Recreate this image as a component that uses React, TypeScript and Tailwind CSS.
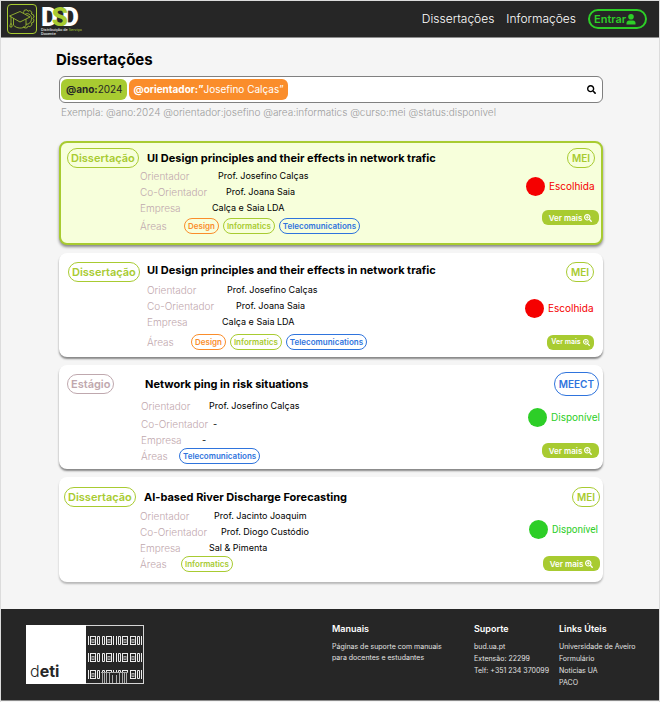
import type { ReactNode } from 'react';
import { FaSearch, FaSearchPlus } from 'react-icons/fa';

const TONES = {
  green: 'border-[#a8cb31] text-[#a8cb31]',
  blue: 'border-[#2f74dd] text-[#2f74dd]',
  orange: 'border-[#fa8d2b] text-[#fa8d2b]',
  mauve: 'border-[#bfa8ae] text-[#bfa8ae]',
};
type Tone = keyof typeof TONES;

const AREAS: Record<string, Tone> = {
  Design: 'orange',
  Informatics: 'green',
  Telecomunications: 'blue',
};

interface Field {
  label: string;
  value: string;
  labelWidth: string;
}

interface Proposal {
  id: number;
  kind: string;
  kindTone: Tone;
  title: string;
  titleStyle: string;
  course: string;
  courseTone: Tone;
  courseStyle: string;
  available: boolean;
  statusStyle: string;
  statusFont: string;
  fields: Field[];
  fieldsStyle: string;
  areas: string[];
  areasStyle: string;
  areasLabel: string;
  cardStyle: string;
  leftStyle: string;
  rightStyle: string;
  buttonStyle: string;
}

const PROPOSALS: Proposal[] = [
  {
    id: 1,
    kind: 'Dissertação',
    kindTone: 'green',
    title: 'UI Design principles and their effects in network trafic',
    titleStyle: 'pl-[7px]',
    course: 'MEI',
    courseTone: 'green',
    courseStyle: 'h-5 mr-1',
    available: false,
    statusStyle: 'mt-[9px] mr-1',
    statusFont: 'w-[46px]',
    fields: [
      { label: 'Orientador', value: 'Prof. Josefino Calças', labelWidth: 'w-[78px]' },
      { label: 'Co-Orientador', value: 'Prof. Joana Saia', labelWidth: 'w-[86px]' },
      { label: 'Empresa', value: 'Calça e Saia LDA', labelWidth: 'w-[72px]' },
    ],
    fieldsStyle: '',
    areas: ['Design', 'Informatics', 'Telecomunications'],
    areasStyle: 'mt-0.5',
    areasLabel: 'w-11',
    cardStyle: 'border-2 border-[#a8cb31] bg-[#f7ffdb] pt-[5px] pl-1.5 pr-0.5 pb-[9px] shadow-[0_2px_3px_rgba(0,0,0,0.45)]',
    leftStyle: 'w-[73px]',
    rightStyle: '',
    buttonStyle: 'w-[57px] text-[8px] mt-3.5',
  },
  {
    id: 2,
    kind: 'Dissertação',
    kindTone: 'green',
    title: 'UI Design principles and their effects in network trafic',
    titleStyle: '',
    course: 'MEI',
    courseTone: 'green',
    courseStyle: 'h-5',
    available: false,
    statusStyle: 'mt-[17px]',
    statusFont: 'w-[46px]',
    fields: [
      { label: 'Orientador', value: 'Prof. Josefino Calças', labelWidth: 'w-20' },
      { label: 'Co-Orientador', value: 'Prof. Joana Saia', labelWidth: 'w-[89px]' },
      { label: 'Empresa', value: 'Calça e Saia LDA', labelWidth: 'w-[75px]' },
    ],
    fieldsStyle: 'mt-0.5',
    areas: ['Design', 'Informatics', 'Telecomunications'],
    areasStyle: 'mt-1',
    areasLabel: 'w-11',
    cardStyle: 'bg-white pt-[7px] pl-[9px] pr-[9px] pb-[7px] shadow-[0_2px_2px_rgba(0,0,0,0.45)]',
    leftStyle: 'w-[79px] pt-0.5',
    rightStyle: 'pt-0.5',
    buttonStyle: 'w-[47px] text-[7px] mt-[17px]',
  },
  {
    id: 3,
    kind: 'Estágio',
    kindTone: 'mauve',
    title: 'Network ping in risk situations',
    titleStyle: 'pl-1 mt-0.5',
    course: 'MEECT',
    courseTone: 'blue',
    courseStyle: 'h-6',
    available: true,
    statusStyle: 'mt-3',
    statusFont: 'w-12',
    fields: [
      { label: 'Orientador', value: 'Prof. Josefino Calças', labelWidth: 'w-[68px] mb-0.5' },
      { label: 'Co-Orientador', value: '-', labelWidth: 'w-[72px]' },
      { label: 'Empresa', value: '-', labelWidth: 'w-[61px]' },
    ],
    fieldsStyle: 'mt-1',
    areas: ['Telecomunications'],
    areasStyle: '',
    areasLabel: 'w-[38px]',
    cardStyle: 'bg-white pt-[7px] pl-2 pr-1 pb-[5px] shadow-[0_2px_2px_rgba(0,0,0,0.45)]',
    leftStyle: 'w-[74px] pt-0.5',
    rightStyle: '',
    buttonStyle: 'w-[57px] text-[8px] mt-4',
  },
  {
    id: 4,
    kind: 'Dissertação',
    kindTone: 'green',
    title: 'AI-based River Discharge Forecasting',
    titleStyle: 'pl-1',
    course: 'MEI',
    courseTone: 'green',
    courseStyle: 'h-5',
    available: true,
    statusStyle: 'mt-[13px]',
    statusFont: "w-12 font-['Roboto',sans-serif]",
    fields: [
      { label: 'Orientador', value: 'Prof. Jacinto Joaquim', labelWidth: 'w-[74px]' },
      { label: 'Co-Orientador', value: 'Prof. Diogo Custódio', labelWidth: 'w-[81px]' },
      { label: 'Empresa', value: 'Sal & Pimenta', labelWidth: 'w-[69px]' },
    ],
    fieldsStyle: 'mt-px',
    areas: ['Informatics'],
    areasStyle: '',
    areasLabel: 'w-[41px]',
    cardStyle: 'bg-white pt-2.5 pl-[5px] pr-[3px] pb-2.5 shadow-[0_2px_2px_rgba(0,0,0,0.25)]',
    leftStyle: 'w-[76px]',
    rightStyle: '',
    buttonStyle: 'w-[57px] text-[8px] mt-[17px]',
  },
];

function Pill({ tone, className, children }: { tone: Tone; className: string; children: ReactNode }) {
  return (
    <span
      className={`inline-flex items-center justify-center rounded-full border whitespace-nowrap ${TONES[tone]} ${className}`}
    >
      {children}
    </span>
  );
}

function Brand() {
  return (
    <a href="#inicio" className="flex items-start gap-1 self-start pt-[3px] font-['Roboto',sans-serif]">
      <svg viewBox="0 0 30 30" className="size-[30px]" fill="none" stroke="#a8cb31" strokeWidth="0.8" aria-hidden="true">
        <rect x="0.5" y="0.5" width="29" height="29" rx="3.5" strokeWidth="1" />
        <path d="M2.5 12 13 7.500l10 5.500-10 5z" strokeLinejoin="round" />
        <path d="M6.500 14.200v7c3 3.400 9.500 4 12.500.5v-6.500M4 12.500v7.500M3 21l1-1.500 1 1.500v2H3z" />
        <path d="M16.500 8.800l.8-2.600 2.600-.4 1.100 1.500 1.900-.8 2 1.700-.5 1.800 2 .7.7 2.400-1.400 1.300 1.300 1.500-.6 2.400-1.900.6.4 2-2 1.800-1.800-.7-1 1.800-2.500.2-1-1.700" />
        <path d="M18.500 9.800c3.500-.8 6 1.500 6 4.800s-2.500 6-5.500 5.600" />
      </svg>
      <span className="flex flex-col pt-0.5 text-white">
        <span className="flex text-[26px] leading-[22px] font-black" aria-label="DSD">
          <span>D</span>
          <span className="relative -ml-1.5 text-[#a8cb31]">S</span>
          <span className="-ml-1.5">D</span>
        </span>
        <span className="text-[4px] leading-[4px] whitespace-nowrap">
          Distribuição de <span className="text-[#a8cb31]">Serviço</span>
          <br />
          Docente
        </span>
      </span>
    </a>
  );
}

function ProposalCard({ item }: { item: Proposal }) {
  return (
    <article className={`flex items-start rounded-lg ${item.cardStyle}`}>
      <div className={`flex shrink-0 ${item.leftStyle}`}>
        <Pill tone={item.kindTone} className="h-5 px-[3px] text-[11px] font-semibold">
          {item.kind}
        </Pill>
      </div>
      <div className="min-w-0 flex-1">
        <h2 className={`text-[11px] leading-5 font-bold whitespace-nowrap ${item.titleStyle}`}>{item.title}</h2>
        <dl className={item.fieldsStyle}>
          {item.fields.map((f) => (
            <div key={f.label} className="flex leading-4">
              <dt className={`shrink-0 text-[10px] leading-4 font-light text-[#bfa8ae] ${f.labelWidth}`}>{f.label}</dt>
              <dd className="text-[9px] leading-4">{f.value}</dd>
            </div>
          ))}
          <div className={`flex ${item.areasStyle}`}>
            <dt className={`shrink-0 text-[10px] leading-4 font-light text-[#bfa8ae] ${item.areasLabel}`}>Áreas</dt>
            <dd className="flex gap-1">
              {item.areas.map((a) => (
                <Pill key={a} tone={AREAS[a]} className="h-4 px-[3px] text-[8px] font-semibold">
                  {a}
                </Pill>
              ))}
            </dd>
          </div>
        </dl>
      </div>
      <div className={`flex shrink-0 flex-col items-end ${item.rightStyle}`}>
        <Pill tone={item.courseTone} className={`px-1 text-[10px] font-semibold ${item.courseStyle}`}>
          {item.course}
        </Pill>
        <p
          className={`flex items-center gap-1 text-[10px] ${item.available ? 'text-[#2dce27]' : 'text-[#f50000]'} ${item.statusStyle}`}
        >
          <span className={`size-[19px] rounded-full ${item.available ? 'bg-[#2dce27]' : 'bg-[#f50000]'}`} />
          <span className={item.statusFont}>{item.available ? 'Disponível' : 'Escolhida'}</span>
        </p>
        <button
          type="button"
          className={`flex h-[15px] items-center justify-center gap-0.5 rounded-md bg-[#a8cb31] font-semibold whitespace-nowrap text-white ${item.buttonStyle}`}
        >
          Ver mais <FaSearchPlus aria-hidden="true" />
        </button>
      </div>
    </article>
  );
}

function Windows({ y }: { y: number }) {
  return (
    <g transform={`translate(0 ${y})`} stroke="#ececec">
      <path d="M62.500 0V9M71.500 .5H73.500V8.500H71.500zM76.500 .5H78.500V8.500H76.500zM87.500 0V9M90.500 0V9M92.500 .5H94.500V8.500H92.500zM111.500 .5H113.500V8.500H111.500zM115.500 0V9" />
      {[64.5, 80.5, 96.5, 104.5].map((x) => (
        <g key={x}>
          <rect x={x} y="0.5" width="5" height="8" />
          <rect x={x + 1.5} y="3.5" width="2" height="3" stroke="#aaa" />
        </g>
      ))}
    </g>
  );
}

function DetiLogo() {
  return (
    <div className="relative h-[59px] w-[118px] shrink-0">
      <svg viewBox="0 0 118 59" className="size-full" fill="none" stroke="#d5d5d5" strokeWidth="1" aria-hidden="true">
        <rect x="0.5" y="0.5" width="117" height="58" />
        <rect x="0" y="0" width="60" height="59" fill="#fff" stroke="none" />
        <Windows y={11} />
        <Windows y={28} />
        <Windows y={45} />
        <rect x="75" y="48" width="27" height="10" fill="#262626" stroke="none" />
        <path d="M75 47.500H102M76.500 48V58M78.500 48V58M80.500 48V58M83.500 48V58M86.500 50V58M90.500 50V58M93.500 48V58M96.500 48V58M98.500 48V58M100.500 48V58" stroke="#aaa" />
      </svg>
      <span className="absolute bottom-1 left-1 text-[16px] leading-[18px] text-[#262626]">
        <span className="font-light">d</span>
        <span className="font-bold">eti</span>
      </span>
    </div>
  );
}

export default function App() {
  return (
    <div className="flex min-h-screen flex-col border-t border-r border-l border-[#dcdcdc] bg-[#f5f5f5] font-['Inter',sans-serif] text-black">
      <header className="flex h-[37px] items-center border-b border-[#8c8c8c] bg-[#262626] pr-3 pl-1.5">
        <Brand />
        <nav className="ml-auto flex items-center gap-3 text-[12px] font-light text-white">
          <a href="#dissertacoes">Dissertações</a>
          <a href="#informacoes">Informações</a>
          <button
            type="button"
            className="flex h-5 w-[59px] items-center rounded-full border-2 border-[#2dce27] pl-1 text-[11px] font-semibold text-[#2dce27]"
          >
            Entrar
            <svg viewBox="0 0 10 11" className="h-[11px] w-2.5 shrink-0" fill="currentColor" aria-hidden="true">
              <circle cx="5" cy="2.800" r="2.800" />
              <path d="M.5 10.500V9C.5 7.300 1.600 6.400 3 6.400h4c1.400 0 2.500.9 2.500 2.600v1.500z" />
            </svg>
          </button>
        </nav>
      </header>

      <main className="pt-3 pr-14 pb-[27px] pl-[58px]">
        <h1 className="-ml-[3px] text-[15px] leading-5 font-bold">Dissertações</h1>
        <form className="mt-1.5 flex h-[27px] items-center gap-0.5 rounded-md border border-[#808080] bg-white pr-1.5 pl-px text-[10px]">
          <span className="flex h-[21px] items-center rounded-md bg-[#a8cb31] px-[5px] text-[#262626]">
            <b>@ano:</b>2024
          </span>
          <span className="flex h-[21px] items-center rounded-md bg-[#fa8d2b] px-1 whitespace-nowrap text-white">
            <b>@orientador:”</b>Josefino Calças”
          </span>
          <input type="text" aria-label="Pesquisar dissertações" className="min-w-0 flex-1 outline-none" />
          <button type="submit" aria-label="Pesquisar">
            <FaSearch className="size-[9px]" />
          </button>
        </form>
        <p className="pl-0.5 text-[10px] leading-[18px] font-light text-[#9c9c9c]">
          Exempla: @ano:2024 @orientador:josefino @area:informatics @curso:mei @status:disponivel
        </p>
        <section className="mt-5 flex flex-col gap-2" aria-label="Propostas">
          {PROPOSALS.map((p) => (
            <ProposalCard key={p.id} item={p} />
          ))}
        </section>
      </main>

      <footer className="flex border-b border-[#8c8c8c] bg-[#262626] pt-4 pr-[9px] pb-[11px] pl-[25px] text-[7px] leading-3 text-[#e2e2e2]">
        <DetiLogo />
        <section className="ml-auto w-[142px]">
          <h2 className="pb-1 text-[9px] leading-[8px] font-semibold text-white">Manuais</h2>
          <p className="w-[120px] pt-1 leading-[11px]">Páginas de suporte com manuais para docentes e estudantes</p>
        </section>
        <section className="w-[85px] whitespace-nowrap">
          <h2 className="pb-2 text-[9px] leading-[8px] font-semibold text-white">Suporte</h2>
          <p>bud.ua.pt</p>
          <p>Extensão: 22299</p>
          <p>Telf: +351 234 370099</p>
        </section>
        <section className="w-[91px] whitespace-nowrap">
          <h2 className="pb-2 text-[9px] leading-[8px] font-semibold text-white">Links Úteis</h2>
          <ul>
            <li><a href="#ua">Universidade de Aveiro</a></li>
            <li><a href="#formulario">Formulário</a></li>
            <li><a href="#noticias">Noticias UA</a></li>
            <li><a href="#paco">PACO</a></li>
          </ul>
        </section>
      </footer>
    </div>
  );
}
